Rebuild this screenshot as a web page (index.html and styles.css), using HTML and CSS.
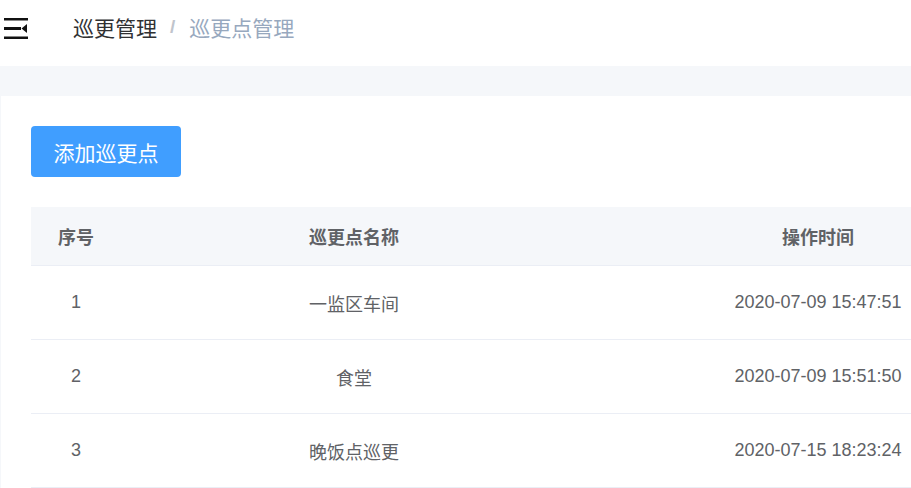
FILE: index.html
```html
<!DOCTYPE html>
<html lang="zh-CN">
<head>
  <meta charset="UTF-8" />
  <title>巡更点管理</title>
  <link rel="stylesheet" href="styles.css">
</head>
<body>
  <div class="navbar">
    <svg class="hamburger" width="24" height="21" viewBox="0 0 24 21">
      <rect x="0" y="0" width="24" height="2.5" fill="#111"/>
      <rect x="0" y="9" width="17" height="3" fill="#111"/>
      <polygon points="23,6 23,15 17.5,10.5" fill="#111"/>
      <rect x="0" y="18.5" width="24" height="2.5" fill="#111"/>
    </svg>
    <div class="breadcrumb">
      <span class="crumb">巡更管理</span>
      <span class="sep">/</span>
      <span class="crumb current">巡更点管理</span>
    </div>
  </div>

  <div class="tags-bar"></div>

  <div class="app-main">
    <button class="btn-primary">添加巡更点</button>

    <div class="table-wrap">
      <table class="data-table">
        <thead>
          <tr>
            <th class="col-index">序号</th>
            <th class="col-name">巡更点名称</th>
            <th class="col-time">操作时间</th>
            <th class="col-rest"></th>
          </tr>
        </thead>
        <tbody>
          <tr>
            <td>1</td>
            <td>一监区车间</td>
            <td>2020-07-09 15:47:51</td>
            <td></td>
          </tr>
          <tr>
            <td>2</td>
            <td>食堂</td>
            <td>2020-07-09 15:51:50</td>
            <td></td>
          </tr>
          <tr>
            <td>3</td>
            <td>晚饭点巡更</td>
            <td>2020-07-15 18:23:24</td>
            <td></td>
          </tr>
        </tbody>
      </table>
    </div>
  </div>
</body>
</html>
```

FILE: styles.css
```css
html, body {
  margin: 0;
  padding: 0;
  overflow: hidden;
}

body {
  font-family: "Liberation Sans", "Noto Sans CJK SC", Arial, sans-serif;
  background: #f5f7fa;
  width: 911px;
  height: 488px;
}

.navbar {
  height: 66px;
  background: #fff;
  display: flex;
  align-items: center;
}

.hamburger {
  margin-left: 4px;
  margin-top: -9px;
}

.breadcrumb {
  margin-left: 45px;
  font-size: 21px;
  display: flex;
  align-items: center;
  margin-top: -12px;
}

.crumb {
  color: #303133;
}

.crumb.current {
  color: #97a8be;
}

.sep {
  color: #c0c4cc;
  margin: 0 14px 0 13px;
  font-weight: bold;
  font-size: 19px;
}

.tags-bar {
  height: 30px;
  background: #f5f7fa;
}

.app-main {
  background: #fff;
  margin-left: 1px;
  padding: 30px 0 0 30px;
  height: 362px;
  overflow: hidden;
}

.btn-primary {
  display: block;
  width: 150px;
  height: 51px;
  background: #409eff;
  color: #fff;
  border: none;
  border-radius: 4px;
  font-family: "Noto Sans CJK SC", sans-serif;
  font-size: 21px;
  padding: 0;
  cursor: pointer;
}

.table-wrap {
  margin-top: 30px;
  overflow: hidden;
}

.data-table {
  border-collapse: collapse;
  table-layout: fixed;
  width: 1140px;
  font-size: 18px;
  color: #606266;
}

.data-table th {
  background: #f5f7fa;
  height: 58px;
  font-weight: bold;
  border-bottom: 1px solid #ebeef5;
  padding: 0;
}

.data-table td {
  height: 73px;
  border-bottom: 1px solid #ebeef5;
  text-align: center;
  padding: 0;
}

.col-index { width: 90px; }
.col-name { width: 466px; }
.col-time { width: 462px; }
.col-rest { width: 122px; }
```
